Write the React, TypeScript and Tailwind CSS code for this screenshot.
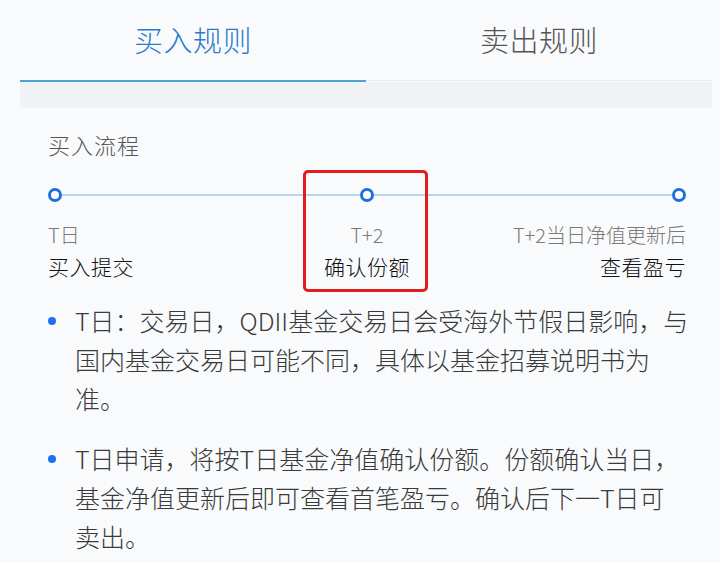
import React from 'react';

const steps = [
  { day: 'T日', label: '买入提交', align: 'text-left' },
  { day: 'T+2', label: '确认份额', align: 'text-center' },
  { day: 'T+2当日净值更新后', label: '查看盈亏', align: 'text-right' },
];

// each paragraph is kept as its visual lines so the wrap matches
const notes = [
  ['T日：交易日，QDII基金交易日会受海外节假日影响，与', '国内基金交易日可能不同，具体以基金招募说明书为', '准。'],
  ['T日申请，将按T日基金净值确认份额。份额确认当日，', '基金净值更新后即可查看首笔盈亏。确认后下一T日可', '卖出。'],
];

const Dot: React.FC = () => (
  <div className="w-[14px] h-[14px] rounded-full border-[3px] border-[#1f6fdc] bg-white shrink-0" />
);

const App: React.FC = () => {
  return (
    <div
      className="w-[720px] h-[563px] overflow-hidden bg-[#f9fafc] font-light"
      style={{ fontFamily: '"Noto Sans CJK SC", "Noto Sans", sans-serif' }}
    >
      <div className="ml-[20px] w-[692px]">
        {/* Tabs */}
        <div className="flex h-[82px]">
          <div className="w-1/2 flex items-center justify-center border-b-2 border-[#4ba3cf]">
            <span className="text-[29px] text-[#2a7bcb] tracking-[0.5px]">买入规则</span>
          </div>
          <div className="w-1/2 flex flex-col">
            <div className="flex-1 flex items-center justify-center">
              <span className="text-[29px] text-[#555555] tracking-[0.5px]">卖出规则</span>
            </div>
            <div className="h-px bg-[#ececf0] mb-px" />
          </div>
        </div>
        <div className="h-[26px] bg-[#f1f2f5]" />

        {/* Flow */}
        <div className="pl-[28px] pr-[26px]">
          <div className="mt-[21px] text-[22px] leading-[30px] text-[#555555] tracking-[1px]">买入流程</div>

          <div className="relative">
            <div className="mt-[29px] flex items-center">
              <Dot />
              <div className="flex-1 h-[2px] bg-[#b4d4f0]" />
              <Dot />
              <div className="flex-1 h-[2px] bg-[#b4d4f0]" />
              <Dot />
            </div>

            <div className="grid grid-cols-3 mt-[19px]">
              {steps.map((s, i) => (
                <div key={i} className={s.align}>
                  <div className="text-[20px] leading-[28px] text-[#7a7a7a]">{s.day}</div>
                  <div className="mt-[2px] text-[21px] leading-[30px] text-[#111111] tracking-[0.5px]">{s.label}</div>
                </div>
              ))}
            </div>

            {/* annotation box */}
            <div className="absolute left-[255px] top-[-18px] w-[125px] h-[122px] border-[3.5px] border-[#e11d1d] rounded-[5px]" />
          </div>

          {/* Notes */}
          <div className="mt-[20px] flex flex-col gap-[21px]">
            {notes.map((lines, i) => (
              <div key={i} className="flex">
                <div className="w-[8px] h-[8px] rounded-full bg-[#1d6ff0] mt-[16px] shrink-0" />
                <p className="ml-[19px] text-[25px] leading-[39px] text-[#3a3a3a] whitespace-nowrap">
                  {lines.map((l, j) => (
                    <React.Fragment key={j}>
                      {l}
                      {j < lines.length - 1 && <br />}
                    </React.Fragment>
                  ))}
                </p>
              </div>
            ))}
          </div>
        </div>
      </div>
    </div>
  );
};

export default App;
